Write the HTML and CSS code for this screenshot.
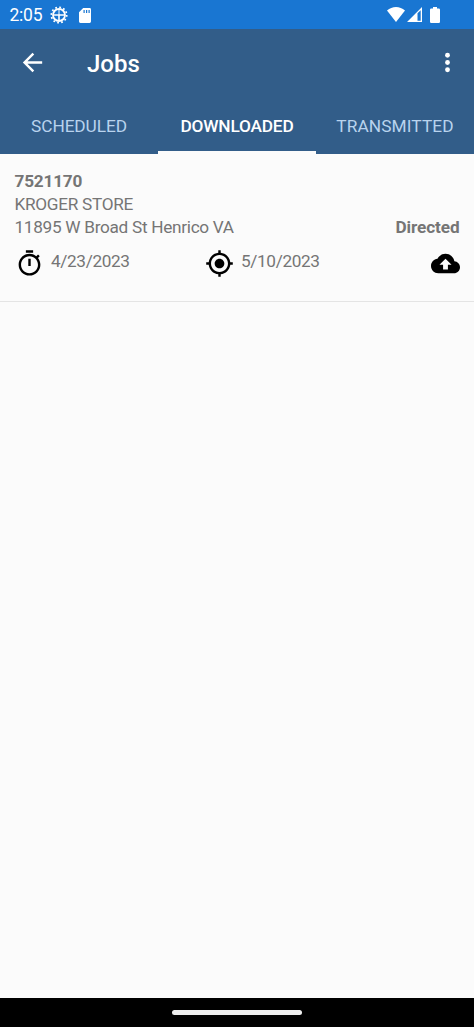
FILE: index.html
```html
<!DOCTYPE html>
<html lang="en">
<head>
<meta charset="utf-8">
<title>Jobs</title>
<link rel="stylesheet" href="styles.css">
</head>
<body>
<div class="screen">
  <div class="status">
    <span class="clock">2:05</span>
    <svg class="gear" viewBox="0 0 18 18"><g fill="none" stroke="#fff"><circle cx="9" cy="9" r="6" stroke-width="1.8"/><circle cx="9" cy="9" r="7.700" stroke-width="1.700" stroke-dasharray="1.800 2.230"/><path d="M3.500 9h11M9 9v6" stroke-width="1.600"/><path d="M9 3v6" stroke-width="1"/></g></svg>
    <svg class="sd" viewBox="0 0 12 15"><path fill="#fff" fill-rule="evenodd" d="M4.200 0H10.600Q12 0 12 1.400V13.600Q12 15 10.600 15H1.400Q0 15 0 13.600V4.300ZM4.500 2v3H5.700V2ZM7 2v3H8.200V2ZM9.500 2v3H10.700V2Z"/></svg>
    <svg class="wifi" viewBox="0 0 18 15"><path fill="#fff" d="M9 15 0 3.600Q4 0 9 0T18 3.600Z"/></svg>
    <svg class="signal" viewBox="0 0 15 15"><path fill="#fff" fill-rule="evenodd" d="M15 0V15H0ZM13.700 3.200 10.500 6.300V13.700H13.700Z"/></svg>
    <svg class="battery" viewBox="0 0 10 16"><path fill="#fff" d="M3 0H7V1.600H8.800Q10 1.600 10 2.800V14.800Q10 16 8.800 16H1.200Q0 16 0 14.800V2.800Q0 1.600 1.200 1.600H3Z"/></svg>
  </div>
  <header class="header">
    <div class="bar">
      <svg class="icon" viewBox="0 0 24 24"><path fill="#fff" d="M20 11H7.830l5.590-5.590L12 4l-8 8 8 8 1.410-1.410L7.830 13H20z"/></svg>
      <h1 class="title">Jobs</h1>
      <svg class="icon" viewBox="0 0 24 24"><g fill="#fff"><circle cx="12" cy="6" r="2"/><circle cx="12" cy="12" r="2"/><circle cx="12" cy="18" r="2"/></g></svg>
    </div>
    <nav class="tabs">
      <span class="tab">SCHEDULED</span>
      <span class="tab active">DOWNLOADED</span>
      <span class="tab">TRANSMITTED</span>
    </nav>
  </header>
  <main class="list">
    <article class="job">
      <div class="number">7521170</div>
      <div class="line">KROGER STORE</div>
      <div class="line place"><span>11895 W Broad St Henrico VA</span><b class="kind">Directed</b></div>
      <div class="meta">
        <svg class="icon" viewBox="0 0 24 24"><path d="M15 1H9v2h6V1zm-4 13h2V8h-2v6zm8.030-6.610l1.420-1.420c-.430-.510-.900-.990-1.410-1.410l-1.420 1.420C16.070 4.740 14.120 4 12 4c-4.970 0-9 4.030-9 9s4.020 9 9 9 9-4.030 9-9c0-2.120-.740-4.070-1.970-5.610zM12 20c-3.870 0-7-3.130-7-7s3.130-7 7-7 7 3.130 7 7-3.130 7-7 7z"/></svg>
        <span class="date start">4/23/2023</span>
        <svg class="icon" viewBox="0 0 24 24"><path d="M12 8c-2.210 0-4 1.790-4 4s1.790 4 4 4 4-1.790 4-4-1.790-4-4-4zm8.940 3c-.460-4.170-3.770-7.480-7.940-7.940V1h-2v2.060C6.830 3.520 3.520 6.830 3.060 11H1v2h2.060c.460 4.170 3.770 7.480 7.940 7.940V23h2v-2.060c4.170-.460 7.480-3.770 7.940-7.940H23v-2h-2.060zM12 19c-3.870 0-7-3.130-7-7s3.130-7 7-7 7 3.130 7 7-3.130 7-7 7z"/></svg>
        <span class="date">5/10/2023</span>
        <svg class="icon upload" viewBox="0 0 24 24"><path d="M19.350 10.040C18.670 6.590 15.640 4 12 4 9.110 4 6.600 5.640 5.350 8.040 2.340 8.360 0 10.910 0 14c0 3.310 2.690 6 6 6h13c2.760 0 5-2.240 5-5 0-2.640-2.050-4.780-4.650-4.960zM14 13v4h-4v-4H7l5-5 5 5h-3z"/></svg>
      </div>
    </article>
  </main>
  <footer class="navbar"><span class="pill"></span></footer>
</div>
</body>
</html>
```
FILE: styles.css
```css
body { margin: 0; font-family: Roboto, sans-serif; background: #fbfbfb; }
.screen { width: 474px; height: 1027px; display: flex; flex-direction: column; overflow: hidden; }
.status { height: 29px; background: #1976d2; color: #fff; display: flex; align-items: center; padding-left: 9.5px; box-sizing: border-box; flex: none; }
.clock { font-size: 17.5px; line-height: 20px; width: 40px; margin-top: 1px; letter-spacing: -0.25px; }
.gear { width: 18px; height: 18px; }
.sd { width: 12px; height: 15px; margin-left: 11.5px; margin-top: 1px; }
.wifi { width: 18px; height: 15px; margin-left: 296px; }
.signal { width: 15px; height: 15px; margin-left: 2px; }
.battery { width: 10px; height: 16px; margin-left: 8px; }
.header { height: 125px; background: #325d89; color: #fff; flex: none; display: flex; flex-direction: column; }
.bar { height: 66px; display: flex; align-items: center; padding: 0 12.5px 0 18px; }
.icon { width: 29px; height: 29px; flex: none; display: block; }
.title { margin: 4px auto 0 40px; font-size: 24px; line-height: 28px; font-weight: 500; }
.tabs { flex: 1; display: grid; grid-template-columns: repeat(3, 1fr); }
.tab { display: flex; justify-content: center; align-items: center; font-size: 17.3px; letter-spacing: -0.1px; font-weight: 400; color: #b9d3ee; padding-top: 6px; border-bottom: 3px solid transparent; white-space: nowrap; }
.tab:last-child { letter-spacing: 0.1px; }
.active { color: #fff; font-weight: 500; letter-spacing: -0.2px; border-bottom-color: #fbfbfb; }
.list { flex: 1; background: #fbfbfb; }
.job { height: 148px; box-sizing: border-box; padding: 16px 14.5px 0; border-bottom: 1px solid #e4e4e4; color: #757575; font-size: 17.2px; letter-spacing: -0.29px; line-height: 23px; }
.number { font-weight: 700; font-size: 17.2px; letter-spacing: -0.2px; }
.kind { font-size: 17.2px; letter-spacing: -0.1px; }
.place { display: flex; justify-content: space-between; }
.meta { display: flex; align-items: flex-start; margin-top: 10px; }
.date { line-height: 24px; margin-left: 7.5px; font-size: 17.2px; letter-spacing: -0.35px; }
.start { width: 153.5px; }
.upload { margin-left: auto; }
.navbar { height: 29px; background: #000; display: flex; justify-content: center; align-items: center; }
.pill { width: 130px; height: 5px; border-radius: 3px; background: #eee; }
```
